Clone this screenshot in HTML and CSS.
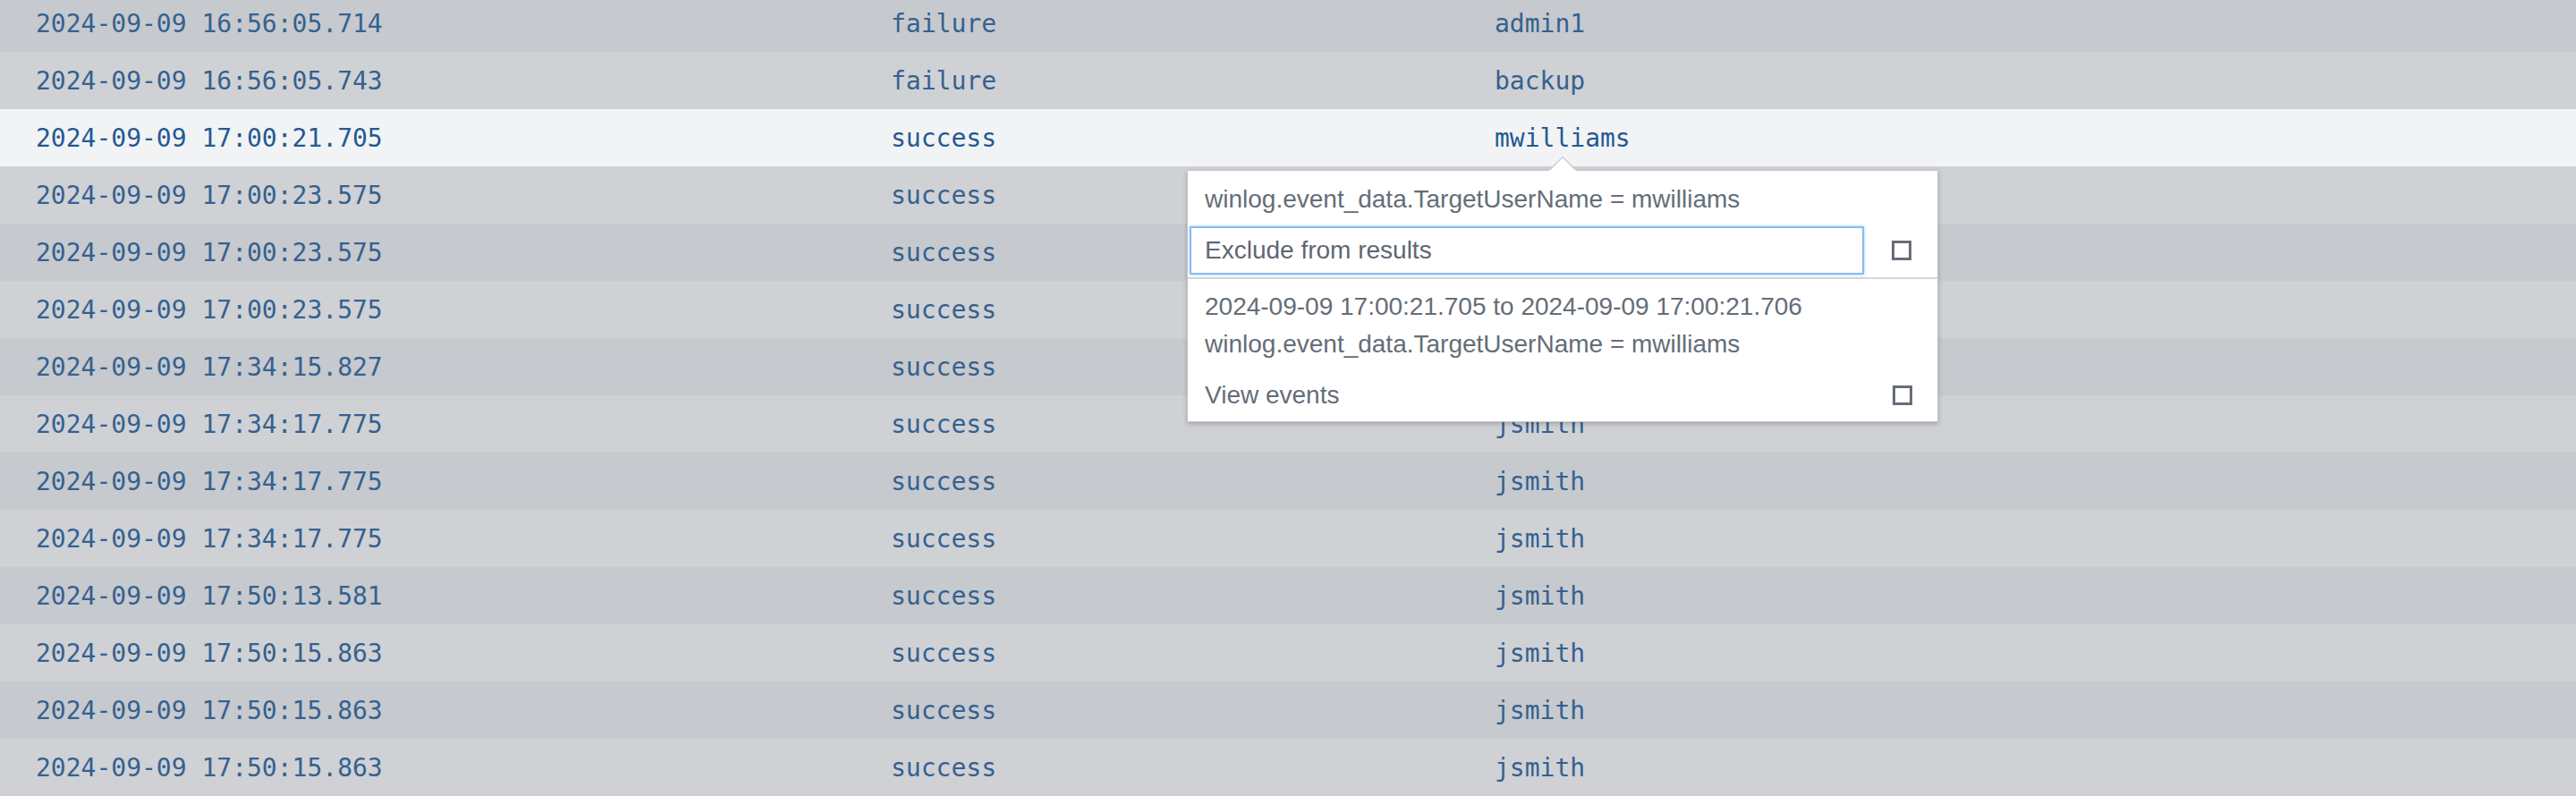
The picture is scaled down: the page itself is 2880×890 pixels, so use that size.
FILE: index.html
```html
<!DOCTYPE html>
<html>
<head>
<meta charset="utf-8">
<link rel="stylesheet" href="styles.css">
</head>
<body>
<div class="table">
  <div class="row dark"><span>2024-09-09 16:56:05.714</span><span>failure</span><span>admin1</span></div>
  <div class="row light"><span>2024-09-09 16:56:05.743</span><span>failure</span><span>backup</span></div>
  <div class="row active"><span>2024-09-09 17:00:21.705</span><span>success</span><span>mwilliams</span></div>
  <div class="row light"><span>2024-09-09 17:00:23.575</span><span>success</span><span></span></div>
  <div class="row dark"><span>2024-09-09 17:00:23.575</span><span>success</span><span></span></div>
  <div class="row light"><span>2024-09-09 17:00:23.575</span><span>success</span><span></span></div>
  <div class="row dark"><span>2024-09-09 17:34:15.827</span><span>success</span><span></span></div>
  <div class="row light"><span>2024-09-09 17:34:17.775</span><span>success</span><span>jsmith</span></div>
  <div class="row dark"><span>2024-09-09 17:34:17.775</span><span>success</span><span>jsmith</span></div>
  <div class="row light"><span>2024-09-09 17:34:17.775</span><span>success</span><span>jsmith</span></div>
  <div class="row dark"><span>2024-09-09 17:50:13.581</span><span>success</span><span>jsmith</span></div>
  <div class="row light"><span>2024-09-09 17:50:15.863</span><span>success</span><span>jsmith</span></div>
  <div class="row dark"><span>2024-09-09 17:50:15.863</span><span>success</span><span>jsmith</span></div>
  <div class="row light"><span>2024-09-09 17:50:15.863</span><span>success</span><span>jsmith</span></div>
</div>

<svg class="caret" width="30" height="18" viewBox="0 0 30 18">
  <path d="M0.5 16 L15 1.5 L29.5 16 Z" fill="#ffffff"/>
  <rect x="0" y="15" width="30" height="3" fill="#ffffff"/>
  <path d="M0.5 16 L15 1.5 L29.5 16" fill="none" stroke="#c4c7cd" stroke-width="1.2"/>
</svg>

<div class="popup">
  <div class="pop-head">
    <div class="pop-line">winlog.event_data.TargetUserName = mwilliams</div>
    <div class="input-row">
      <div class="filter-input">Exclude from results</div>
      <span class="check"></span>
    </div>
  </div>
  <div class="pop-body">
    <div class="pop-line">2024-09-09 17:00:21.705 to 2024-09-09 17:00:21.706</div>
    <div class="pop-line">winlog.event_data.TargetUserName = mwilliams</div>
    <div class="view-row">
      <span>View events</span>
      <span class="check"></span>
    </div>
  </div>
</div>
</body>
</html>
```

FILE: styles.css
```css
html, body {
  margin: 0;
  padding: 0;
}

body {
  width: 2880px;
  height: 890px;
  overflow: hidden;
  background: #cfd1d5;
  position: relative;
}

.table {
  margin-top: -6px;
  display: flex;
  flex-direction: column;
}

.row {
  height: 64px;
  display: grid;
  grid-template-columns: 956px 675px 1fr;
  align-items: center;
  padding-left: 40px;
  font-family: "DejaVu Sans Mono", "Liberation Mono", monospace;
  font-size: 28px;
  color: #35618f;
  white-space: pre;
}

.row.dark {
  background: #c6c9ce;
}

.row.light {
  background: #cfd1d5;
}

.row.active {
  background: #f2f3f5;
  color: #245993;
}

.caret {
  position: absolute;
  left: 1732px;
  top: 174px;
  z-index: 3;
  display: block;
}

.popup {
  position: absolute;
  left: 1327px;
  top: 190px;
  width: 840px;
  box-sizing: border-box;
  background: #ffffff;
  border: 1px solid #c4c7cd;
  box-shadow: 0 2px 5px rgba(0, 0, 0, 0.22);
  font-family: "Liberation Sans", Arial, sans-serif;
  font-size: 28px;
  color: #656d78;
  z-index: 2;
}

.pop-head {
  padding: 11px 0 3px;
  border-bottom: 2px solid #d2d5db;
}

.pop-line {
  height: 42px;
  line-height: 42px;
  padding-left: 19px;
  white-space: nowrap;
}

.input-row {
  margin-top: 9px;
  padding-left: 2px;
  display: flex;
  align-items: center;
  gap: 31px;
}

.filter-input {
  width: 754px;
  height: 54px;
  box-sizing: border-box;
  border: 2px solid #86bdf2;
  box-shadow: 0 0 3px rgba(70, 150, 235, 0.55);
  padding-left: 15px;
  line-height: 50px;
  color: #5f6773;
  background: #ffffff;
}

.check {
  width: 22px;
  height: 22px;
  box-sizing: border-box;
  border: 3px solid #666d78;
  display: block;
  flex: none;
}

.pop-body {
  padding: 10px 0 8px;
}

.view-row {
  margin-top: 15px;
  height: 42px;
  display: flex;
  align-items: center;
  justify-content: space-between;
  padding-left: 19px;
  padding-right: 28px;
}
```
